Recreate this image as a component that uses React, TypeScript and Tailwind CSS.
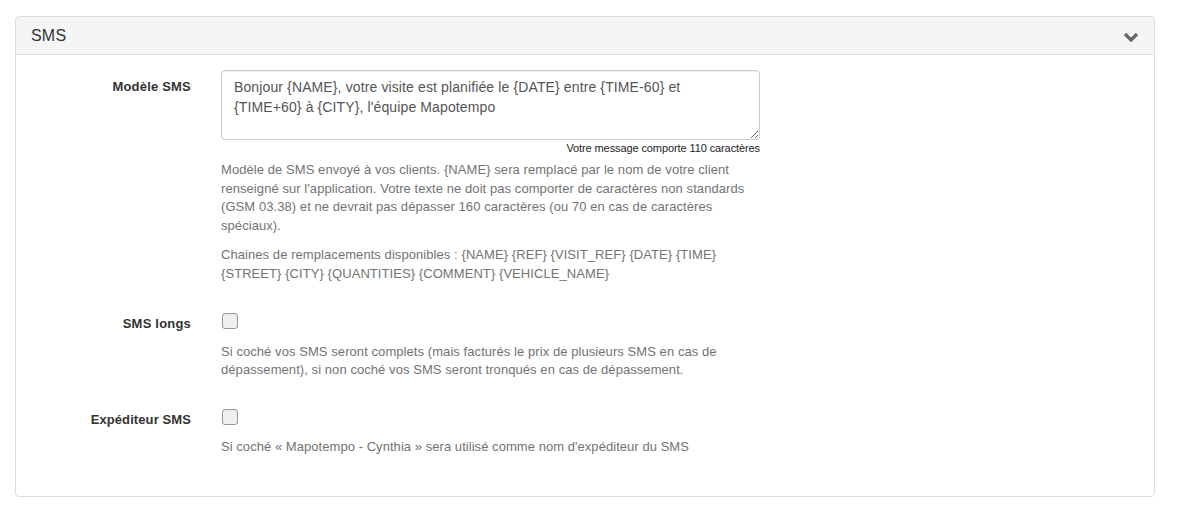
import React from 'react';

const Checkbox = () => (
  <div className="h-4 w-4 rounded-[3px] border border-[#999] bg-[#efefef]" />
);

export default function App() {
  return (
    <div className="min-h-screen bg-white pl-[15px] pt-[16px] font-['Liberation_Sans',Arial,sans-serif] text-[13px] text-[#333]">
      <div className="w-[1140px] rounded-[4px] border border-[#ddd] bg-white">
        {/* Panel heading */}
        <div className="flex h-[38px] items-center justify-between rounded-t-[4px] border-b border-[#ddd] bg-[#f5f5f5] px-[15px]">
          <h3 className="text-[16px] leading-[18px] tracking-[0.2px] text-[#333]">SMS</h3>
          <svg width="16" height="10" viewBox="0 0 16 10" className="mt-[2px]">
            <polyline points="2,2 8,8 14,2" fill="none" stroke="#666" strokeWidth="3.2" />
          </svg>
        </div>

        {/* Panel body */}
        <div className="pb-[15px] pt-[15px]">
          {/* Modèle SMS */}
          <div className="flex pb-[15px]">
            <label className="w-[190px] shrink-0 pr-[15px] pt-[8px] text-right font-bold leading-[18.6px] tracking-[0.2px]">
              Modèle SMS
            </label>
            <div className="w-[569px] px-[15px]">
              <textarea
                className="block h-[70px] w-full rounded-[4px] border border-[#ccc] px-[12px] py-[6px] text-[14px] leading-[20px] tracking-[0.12px] text-[#555] shadow-[inset_0_1px_1px_rgba(0,0,0,0.075)] outline-none"
                defaultValue="Bonjour {NAME}, votre visite est planifiée le {DATE} entre {TIME-60} et {TIME+60} à {CITY}, l'équipe Mapotempo"
              />
              <div className="text-right text-[11px] leading-[16px] tracking-[-0.1px] text-[#222]">
                Votre message comporte 110 caractères
              </div>
              <p className="mt-[5px] leading-[18.6px] tracking-[0.07px] text-[#737373]">
                Modèle de SMS envoyé à vos clients. {'{NAME}'} sera remplacé par le nom de votre client renseigné sur l'application. Votre texte ne doit pas comporter de caractères non standards (GSM 03.38) et ne devrait pas dépasser 160 caractères (ou 70 en cas de caractères spéciaux).
              </p>
              <p className="mb-[9px] mt-[11px] leading-[18.6px] tracking-[0.07px] text-[#737373]">
                Chaines de remplacements disponibles : {'{NAME} {REF} {VISIT_REF} {DATE} {TIME} {STREET} {CITY} {QUANTITIES} {COMMENT} {VEHICLE_NAME}'}
              </p>
            </div>
          </div>

          {/* SMS longs */}
          <div className="flex pb-[15px]">
            <label className="w-[190px] shrink-0 pr-[15px] pt-[7px] text-right font-bold leading-[18.6px] tracking-[0.2px]">
              SMS longs
            </label>
            <div className="w-[569px] px-[15px]">
              <div className="flex h-[27px] items-start pl-[1px] pt-[5px]">
                <Checkbox />
              </div>
              <p className="mb-[9px] mt-[8px] leading-[18.6px] tracking-[0.07px] text-[#737373]">
                Si coché vos SMS seront complets (mais facturés le prix de plusieurs SMS en cas de dépassement), si non coché vos SMS seront tronqués en cas de dépassement.
              </p>
            </div>
          </div>

          {/* Expéditeur SMS */}
          <div className="flex pb-[15px]">
            <label className="w-[190px] shrink-0 pr-[15px] pt-[7px] text-right font-bold leading-[18.6px] tracking-[0.1px]">
              Expéditeur SMS
            </label>
            <div className="w-[569px] px-[15px]">
              <div className="flex h-[27px] items-start pl-[1px] pt-[5px]">
                <Checkbox />
              </div>
              <p className="mb-[10px] mt-[7px] leading-[18.6px] tracking-[0.05px] text-[#737373]">
                Si coché « Mapotempo - Cynthia » sera utilisé comme nom d'expéditeur du SMS
              </p>
            </div>
          </div>
        </div>
      </div>
    </div>
  );
}
